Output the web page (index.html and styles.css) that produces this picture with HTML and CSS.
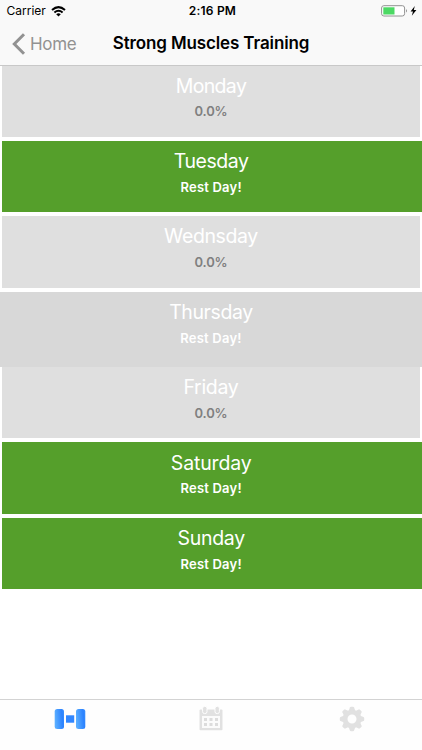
FILE: index.html
```html
<!DOCTYPE html>
<html lang="en">
<head>
<meta charset="utf-8">
<title>Strong Muscles Training</title>
<link rel="stylesheet" href="styles.css">
</head>
<body>
<header>
  <div class="status">
    <div class="carrier"><span>Carrier</span>
      <svg width="15" height="11" viewBox="0 0 15 11"><g fill="none" stroke="#000" stroke-width="2"><path d="M1 4Q7.500-1.700 14 4"/><path d="M3.400 6.500Q7.500 3 11.600 6.500"/></g><path d="M5.200 8.200Q7.500 6.400 9.800 8.200L7.500 10.600Z"/></svg>
    </div>
    <div class="time">2:16 PM</div>
    <div class="power">
      <svg width="37" height="12" viewBox="0 0 37 12"><rect x=".6" y=".7" width="23" height="10.300" rx="2.300" fill="#fff" stroke="#929292"/><rect x="2.300" y="2.300" width="11.200" height="7.200" fill="#4cd964"/><path d="M25 4Q27 5.800 25 7.600Z" fill="#929292"/><path d="M33.800 1L29.600 6.500H32L30.800 10.800L35.400 5H32.800Z"/></svg>
    </div>
  </div>
  <div class="nav">
    <div class="back"><svg width="14" height="22" viewBox="0 0 14 22"><path d="M12 1.300L2.300 11L12 20.700" fill="none" stroke="#929292" stroke-width="3"/></svg><span>Home</span></div>
    <h1>Strong Muscles Training</h1>
  </div>
</header>
<main>
  <section class="day"><div class="card"><h2 class="mon">Monday</h2><p>0.0%</p></div></section>
  <section class="day rest"><div class="card"><h2 class="tue">Tuesday</h2><p>Rest Day!</p></div></section>
  <section class="day"><div class="card"><h2 class="wed">Wednsday</h2><p>0.0%</p></div></section>
  <section class="day rest selected"><div class="card"><h2 class="thu">Thursday</h2><p>Rest Day!</p></div></section>
  <section class="day"><div class="card"><h2 class="fri">Friday</h2><p>0.0%</p></div></section>
  <section class="day rest"><div class="card"><h2 class="sat">Saturday</h2><p>Rest Day!</p></div></section>
  <section class="day rest"><div class="card"><h2 class="sun">Sunday</h2><p>Rest Day!</p></div></section>
</main>
<footer>
  <div class="tab"><svg width="32" height="22" viewBox="0 0 32 22"><defs><linearGradient id="blue" x1="0" x2="1" y1=".2" y2="0"><stop stop-color="#59adff"/><stop offset=".75" stop-color="#2b82ff"/><stop offset="1" stop-color="#3c92ff"/></linearGradient></defs><rect x=".7" y="1" width="9.300" height="20" rx="2.500" fill="url(#blue)"/><rect x="12" y="7.300" width="8.200" height="7.400" fill="#3187ff"/><rect x="22" y="1" width="9.300" height="20" rx="2.500" fill="url(#blue)"/></svg></div>
  <div class="tab"><svg width="26" height="26" viewBox="0 0 26 26"><rect x="1.500" y="3.500" width="23" height="20.800" rx="1" fill="#e1e1e1"/><path d="M4 10H22V22H4Z" fill="#fbfbfb"/><g fill="#e1e1e1" stroke="#fefefe"><rect x="4.600" y=".3" width="4.400" height="7.300" rx="2"/><rect x="17" y=".3" width="4.400" height="7.300" rx="2"/></g><path fill="#dcdcdc" d="M6 12h3v3H6zm5.500 0h3v3h-3zm5.500 0h3v3h-3zm-11 5h3v3H6zm5.500 0h3v3h-3zm5.500 0h3v3h-3z"/></svg></div>
  <div class="tab"><svg width="26" height="26" viewBox="0 0 26 26"><g fill="#e1e1e1"><path id="tooth" d="M9.300 6L10.900 1.500Q11.200.8 12 .8H14Q14.800.8 15.100 1.500L16.700 6Z"/><use href="#tooth" transform="rotate(45 13 13)"/><use href="#tooth" transform="rotate(90 13 13)"/><use href="#tooth" transform="rotate(135 13 13)"/><use href="#tooth" transform="rotate(180 13 13)"/><use href="#tooth" transform="rotate(225 13 13)"/><use href="#tooth" transform="rotate(270 13 13)"/><use href="#tooth" transform="rotate(315 13 13)"/></g><circle cx="13" cy="13" r="6.900" fill="none" stroke="#e1e1e1" stroke-width="4.800"/></svg></div>
</footer>
</body>
</html>
```
FILE: styles.css
```css
* { box-sizing: border-box; }
body { margin: 0; width: 422px; height: 750px; display: flex; flex-direction: column; overflow: hidden; background: #fff; color: #000; font-family: Inter, "Liberation Sans", sans-serif; }
svg { display: block; flex: none; }
h1, h2, p { margin: 0; white-space: nowrap; }
header { height: 65.5px; flex: none; background: #f9f9f9; border-bottom: 1px solid #c8c8c8; }
.status { height: 22px; display: grid; grid-template-columns: 1fr auto 1fr; align-items: center; font-size: 12px; }
.carrier { display: flex; align-items: center; gap: 5px; padding-left: 6.5px; }
.carrier span, .time { padding-bottom: 1px; }
.time { font-weight: 600; letter-spacing: .2px; padding-left: 3px; }
.power { justify-self: end; padding-right: 4px; }
.nav { height: 43px; display: grid; grid-template-columns: 1fr auto 1fr; align-items: center; }
.back { display: flex; align-items: center; gap: 4px; padding-left: 12px; color: #929292; font-size: 17px; letter-spacing: -.3px; }
h1 { font-size: 17px; line-height: 21px; font-weight: 600; letter-spacing: -.13px; }
main { flex: 1; }
.day { height: 75.35px; padding: 0 2.4px 4px 2.3px; }
.card { height: 71.35px; background: #dfdfdf; text-align: center; padding-top: 8.3px; color: #808080; }
h2 { color: #fff; font-size: 19.5px; line-height: 24px; font-weight: 400; letter-spacing: -.3px; }
.mon { letter-spacing: -.65px; }
.tue { letter-spacing: -.45px; }
.wed, .thu { letter-spacing: -.4px; }
.sat { letter-spacing: -.15px; }
p { margin-top: 5.7px; font-size: 13px; line-height: 16px; font-weight: 600; letter-spacing: -.2px; }
.rest { padding-right: 0; }
.rest .card { background: #559f2b; color: #fff; padding-right: 2px; }
.rest p { letter-spacing: .2px; }
.selected { padding: 0; background: #d8d8d8; }
.selected .card { background: #d8d8d8; padding-right: 0; }
footer { height: 51px; flex: none; display: grid; grid-template-columns: repeat(3, 1fr); background: #fefefe; border-top: 1px solid #d3d3d3; }
.tab { display: flex; justify-content: center; align-items: center; height: 38px; }
```
